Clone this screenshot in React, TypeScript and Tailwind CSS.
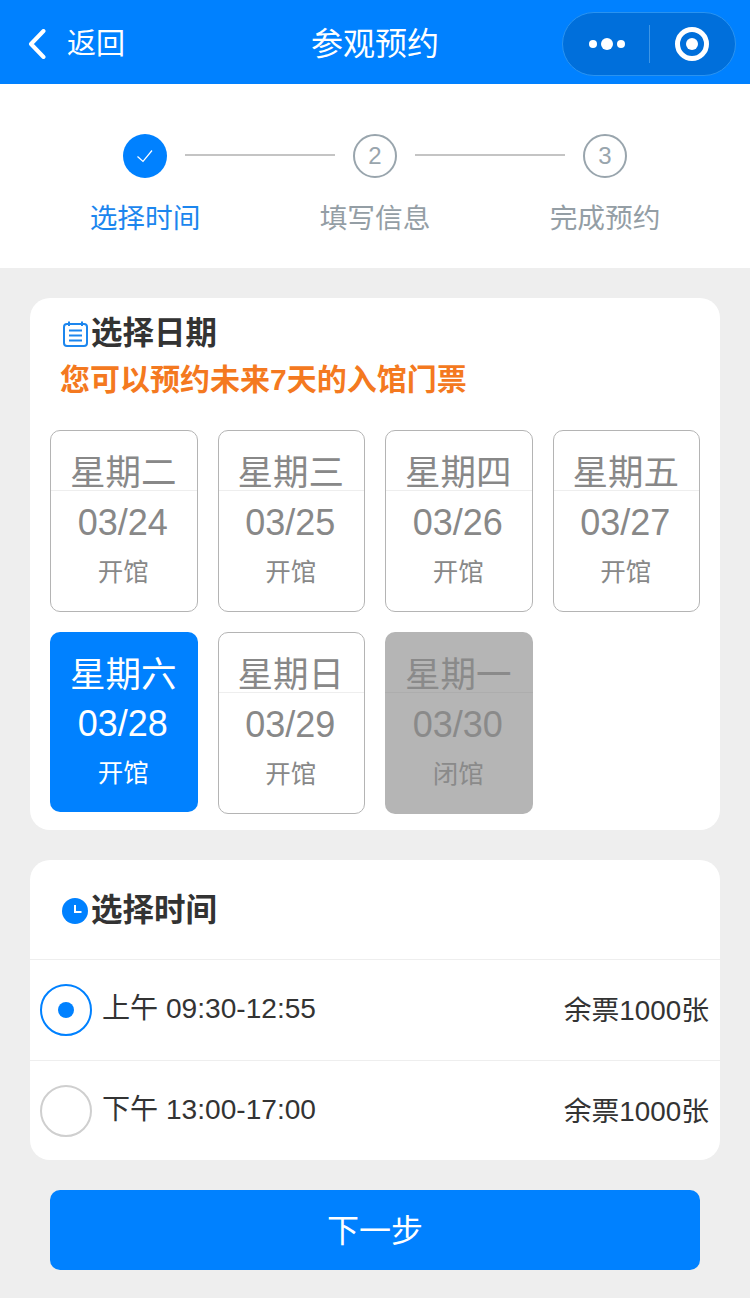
const font = { fontFamily: '"Liberation Sans","Noto Sans CJK SC",sans-serif' };

type Day = { w: string; d: string; s: string; kind?: 'on' | 'off' };
const days: Day[] = [
  { w: '星期二', d: '03/24', s: '开馆' },
  { w: '星期三', d: '03/25', s: '开馆' },
  { w: '星期四', d: '03/26', s: '开馆' },
  { w: '星期五', d: '03/27', s: '开馆' },
  { w: '星期六', d: '03/28', s: '开馆', kind: 'on' },
  { w: '星期日', d: '03/29', s: '开馆' },
  { w: '星期一', d: '03/30', s: '闭馆', kind: 'off' },
];

function DayCard({ day }: { day: Day }) {
  const on = day.kind === 'on';
  const off = day.kind === 'off';
  return (
    <div
      className={
        on
          ? 'flex h-[180px] flex-col items-center rounded-[10px] bg-[#0081ff] text-white'
          : off
            ? 'flex h-[182px] flex-col items-center rounded-[10px] bg-[#b5b5b5] text-[#8a8a8a]'
            : 'flex h-[182px] flex-col items-center rounded-[10px] border border-[#b4b4b4] bg-white text-[#888888]'
      }
    >
      <div
        className={
          on
            ? 'flex h-[60px] w-full items-end justify-center pr-[1px] text-[35.5px] leading-[34px]'
            : off
              ? 'flex h-[61px] w-full items-end justify-center border-b border-[#adadad] pr-[1px] text-[35.5px] leading-[34px]'
              : 'flex h-[60px] w-full items-end justify-center border-b border-[#eeeeee] pr-[1px] text-[35.5px] leading-[34px]'
        }
      >
        {day.w}
      </div>
      <div className="mt-[11px] pr-[2px] text-[36px] leading-[42px]">{day.d}</div>
      <div className="mt-[13px] pr-[1px] text-[25.5px] leading-[30px]">{day.s}</div>
    </div>
  );
}

function Step({ label, n, active }: { label: string; n?: string; active?: boolean }) {
  return (
    <div className="flex w-[110px] flex-col items-center">
      {active ? (
        <div className="flex h-[44px] w-[44px] items-center justify-center rounded-full bg-[#0081ff]">
          <svg width="20" height="20" viewBox="0 0 20 20" fill="none" stroke="#fff" strokeWidth="1.2">
            <path d="M2.5 10.5 L8 15.5 L17 4.5" />
          </svg>
        </div>
      ) : (
        <div className="flex h-[44px] w-[44px] items-center justify-center rounded-full border-2 border-[#99a5ad] text-[24px] leading-none text-[#99a5ad]">
          {n}
        </div>
      )}
      <div className={active ? 'mt-[24px] whitespace-nowrap text-[27.7px] leading-[34px] text-[#1c86ee]' : 'mt-[24px] whitespace-nowrap text-[27.7px] leading-[34px] text-[#949ea5]'}>
        {label}
      </div>
    </div>
  );
}

function TimeRow({ text, selected, last }: { text: string; selected?: boolean; last?: boolean }) {
  return (
    <div className={last ? 'flex h-[100px] items-center pl-[10px] pr-[11px]' : 'flex h-[101px] items-center border-b border-[#eeeeee] pl-[10px] pr-[11px]'}>
      {selected ? (
        <div className="flex h-[52px] w-[52px] items-center justify-center rounded-full border-2 border-[#0081ff]">
          <div className="h-[16px] w-[16px] rounded-full bg-[#0081ff]" />
        </div>
      ) : (
        <div className="h-[52px] w-[52px] rounded-full border-2 border-[#cfcfcf]" />
      )}
      <div className="mb-[2px] ml-[10px] text-[28.1px] leading-[34px] text-[#333333]">{text}</div>
      <div className="ml-auto mt-[1px] text-[27.8px] leading-[34px] text-[#333333]">余票1000张</div>
    </div>
  );
}

export default function App() {
  return (
    <div className="flex h-[1298px] w-[750px] flex-col overflow-hidden bg-[#eeeeee]" style={font}>
      <header className="flex h-[84px] shrink-0 items-center bg-[#0081ff] pt-[4px] text-white">
        <div className="flex w-[250px] items-center pl-[28px]">
          <svg width="18" height="30" viewBox="0 0 18 30" fill="none" stroke="#fff" strokeWidth="4" strokeLinecap="round" strokeLinejoin="round">
            <path d="M15.5 2 L3 15 L15.5 28" />
          </svg>
          <span className="ml-[21px] text-[29px] leading-none">返回</span>
        </div>
        <div className="w-[250px] text-center text-[32px] leading-none">参观预约</div>
        <div className="ml-[62px] flex h-[64px] w-[174px] items-center rounded-full border border-[#2a93f0] bg-[#006fdb]">
          <div className="flex w-[86px] items-center justify-center gap-[4px] pl-[2px]">
            <span className="h-[8px] w-[8px] rounded-full bg-white" />
            <span className="h-[12px] w-[12px] rounded-full bg-white" />
            <span className="h-[8px] w-[8px] rounded-full bg-white" />
          </div>
          <div className="h-[38px] w-px bg-[#3d96e6]" />
          <div className="flex flex-1 items-center justify-center pr-[2px]">
            <div className="flex h-[34px] w-[34px] items-center justify-center rounded-full border-[5px] border-white">
              <div className="h-[12px] w-[12px] rounded-full bg-white" />
            </div>
          </div>
        </div>
      </header>

      <section className="flex h-[184px] shrink-0 items-start justify-center bg-white pt-[50px]">
        <Step label="选择时间" active />
        <div className="mx-[-15px] mt-[20px] h-[2px] w-[150px] bg-[#c4c4c4]" />
        <Step label="填写信息" n="2" />
        <div className="mx-[-15px] mt-[20px] h-[2px] w-[150px] bg-[#c4c4c4]" />
        <Step label="完成预约" n="3" />
      </section>

      <section className="mx-[30px] mt-[30px] h-[532px] shrink-0 rounded-[20px] bg-white px-[20px]">
        <div className="flex h-[70px] items-center pl-[12px] pt-[1px]">
          <svg className="mb-[-1px]" width="27" height="28" viewBox="0 0 27 28" fill="none" stroke="#1c86ee" strokeWidth="2">
            <rect x="2" y="4" width="23" height="22" rx="3" />
            <path d="M7 1.5 V6 M20 1.5 V6 M11 4 H16" />
            <path d="M7 10.5 H20 M7 15.5 H20 M7 20.5 H20" />
          </svg>
          <span className="ml-[2px] text-[31.5px] font-bold leading-none text-[#333333]">选择日期</span>
        </div>
        <div className="ml-[10px] mt-[-6px] text-[30px] font-bold leading-[36px] text-[#f47920]">您可以预约未来7天的入馆门票</div>
        <div className="mt-[32px] grid grid-cols-4 items-start gap-x-[20px] gap-y-[20px]">
          {days.map((day) => (
            <DayCard key={day.d} day={day} />
          ))}
        </div>
      </section>

      <section className="mx-[30px] mt-[30px] h-[300px] shrink-0 overflow-hidden rounded-[20px] bg-white">
        <div className="flex h-[100px] items-center border-b border-[#eeeeee] pl-[32px] pt-[3px]">
          <svg width="26" height="26" viewBox="0 0 26 26">
            <circle cx="13" cy="13" r="13" fill="#0081ff" />
            <path d="M13 7 V14 H19.5" fill="none" stroke="#fff" strokeWidth="2" />
          </svg>
          <span className="ml-[3px] text-[31.5px] font-bold leading-none text-[#333333]">选择时间</span>
        </div>
        <TimeRow text="上午 09:30-12:55" selected />
        <TimeRow text="下午 13:00-17:00" last />
      </section>

      <button className="mx-[50px] mt-[30px] flex h-[80px] shrink-0 items-center justify-center rounded-[10px] bg-[#0081ff] pt-[2px] text-[32px] text-white">
        下一步
      </button>
    </div>
  );
}
